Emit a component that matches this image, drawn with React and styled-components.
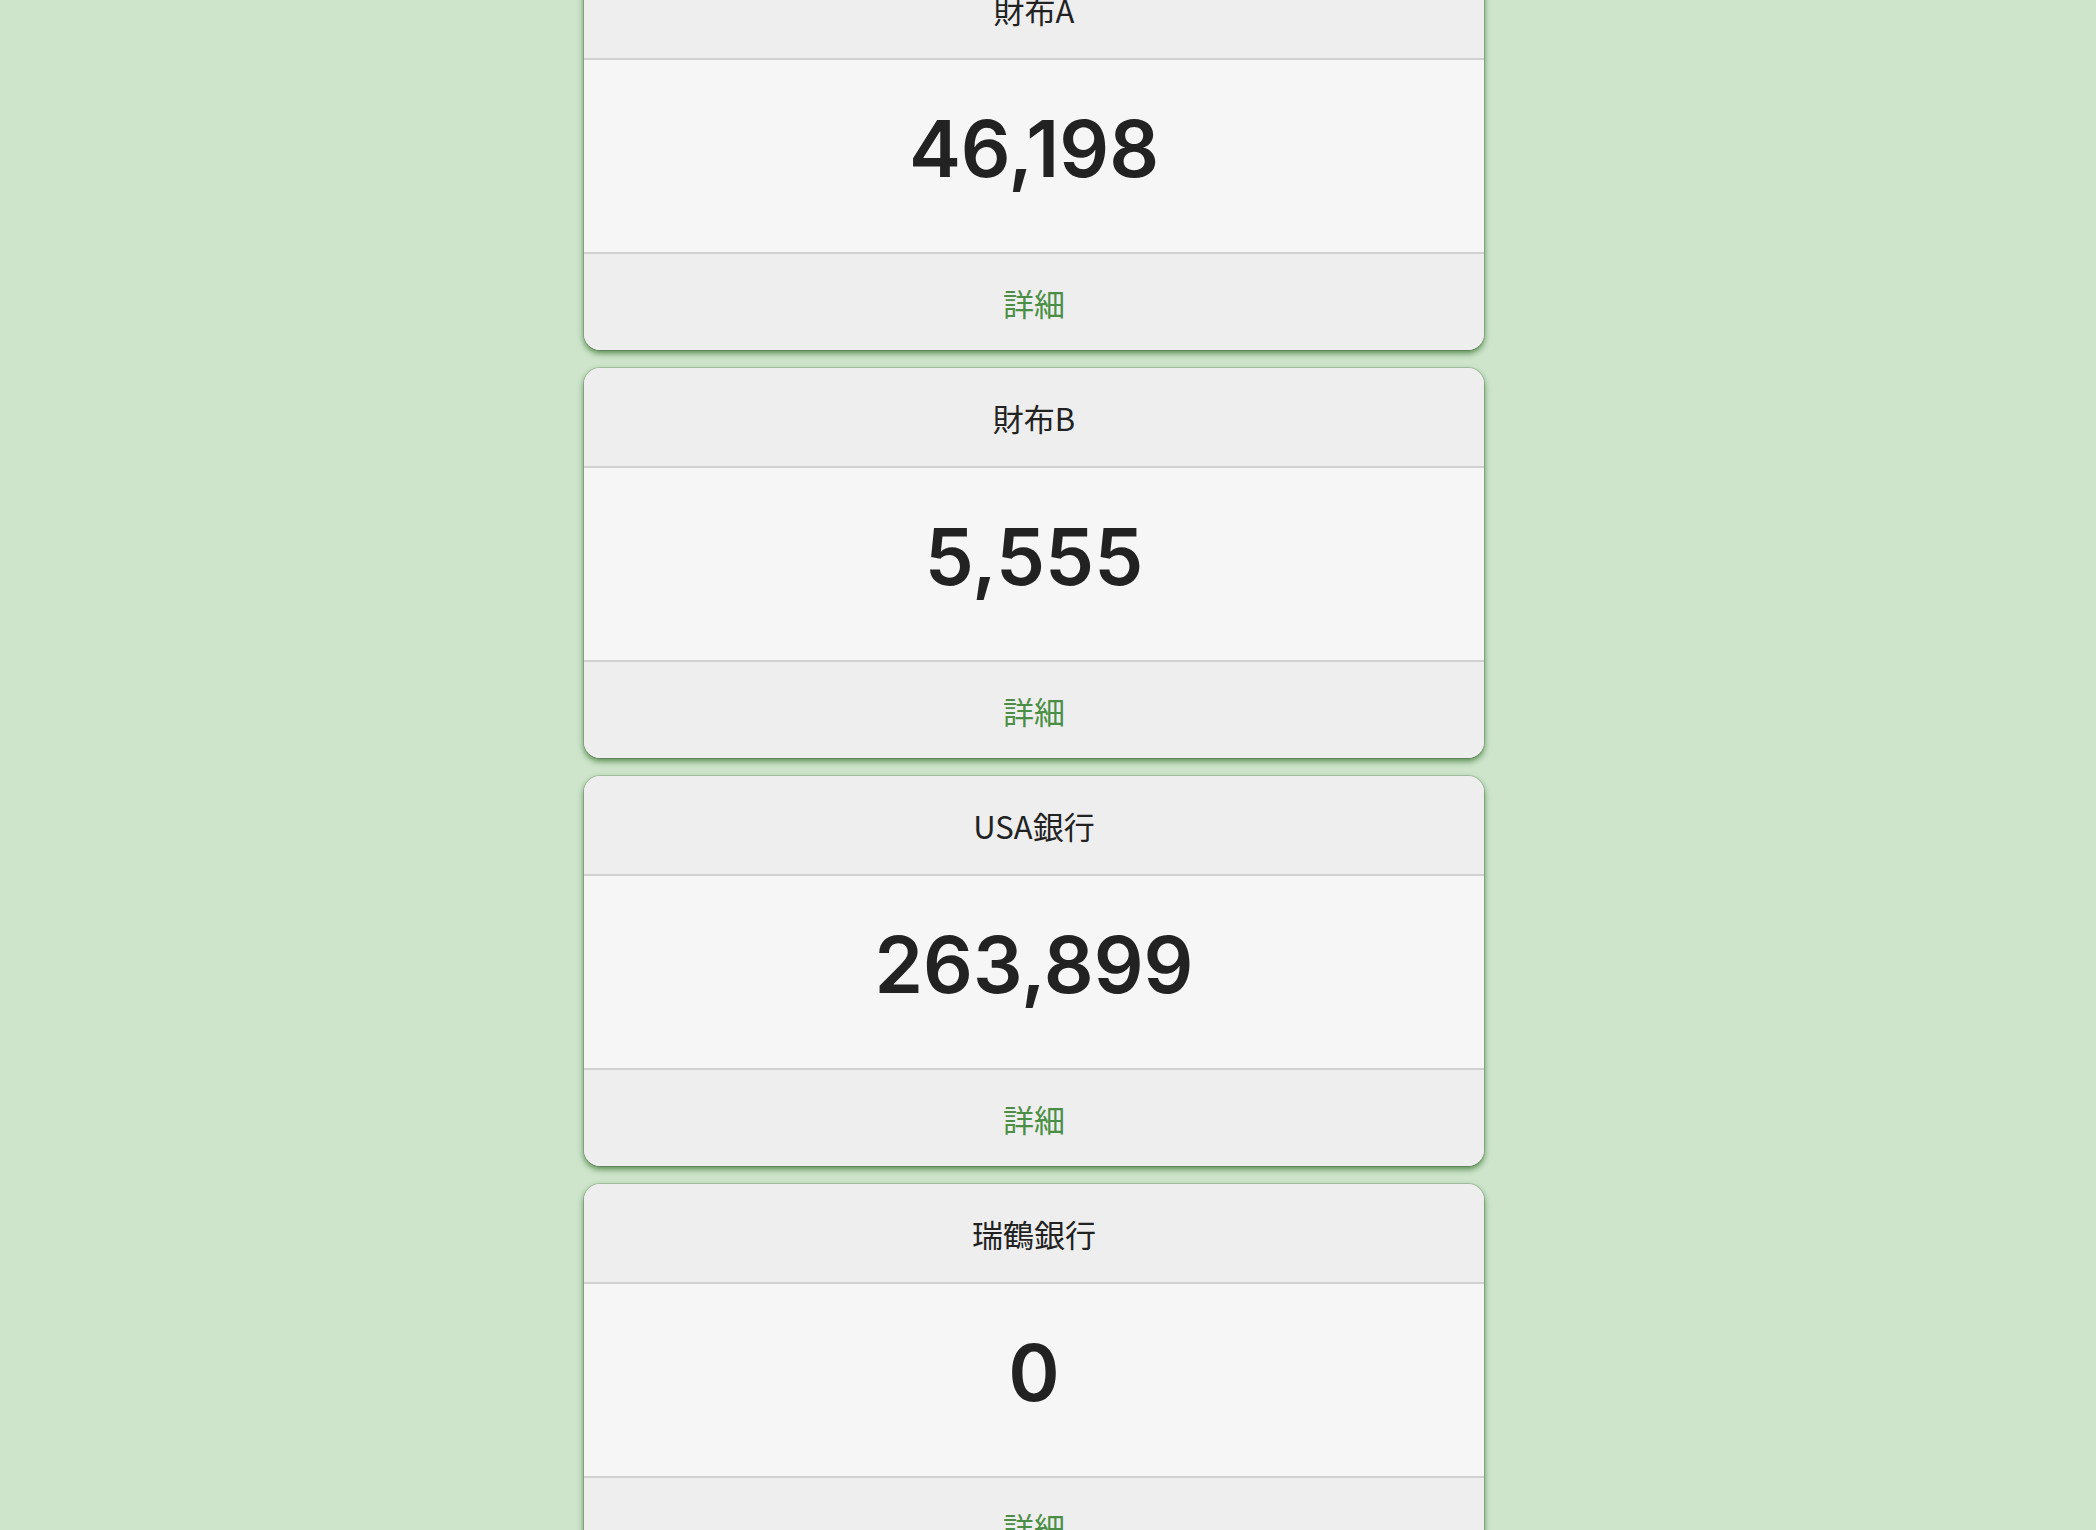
import React from 'react'
import styled, { createGlobalStyle } from "styled-components";

const GlobalStyle = createGlobalStyle`
  html, body {
    margin: 0;
    padding: 0;
    background-color: #cee5cb;
    font-family: "Noto Sans CJK JP", "Noto Sans", sans-serif;
    overflow: hidden;
  }
`;

const Page = styled.div`
  min-height: 100vh;
  display: flex;
  justify-content: center;
  padding-right: 28px;
  background-color: #cee5cb;
`;

const List = styled.div`
  width: 900px;
  display: flex;
  flex-direction: column;
  gap: 18px;
  margin-top: -40px;
`;

const Card = styled.div`
  display: flex;
  flex-direction: column;
  height: 390px;
  border-radius: 16px;
  overflow: hidden;
  background-color: #eeeeee;
  box-shadow: 0 0 0 1px rgba(0, 0, 0, 0.13), 0 3px 6px 0 rgba(55, 115, 45, 0.85);
  flex-shrink: 0;
`;

const Header = styled.div`
  height: 98px;
  display: flex;
  align-items: center;
  justify-content: center;
  font-size: 31px;
  color: #222;
  background-color: #eeeeee;
  border-bottom: 2px solid #d2d2d2;
`;

const Body = styled.div`
  height: 192px;
  display: flex;
  align-items: center;
  justify-content: center;
  background-color: #f6f6f6;
  border-bottom: 2px solid #d2d2d2;
`;

const Amount = styled.span`
  font-family: Inter, "Noto Sans", sans-serif;
  font-size: 78px;
  font-weight: 600;
  color: #222;
  line-height: 1;
  margin-top: -14px;
`;

const Footer = styled.div`
  flex: 1;
  display: flex;
  align-items: center;
  justify-content: center;
  background-color: #eeeeee;
`;

const DetailLink = styled.a`
  font-size: 31px;
  color: #4a8f45;
  text-decoration: none;
  cursor: pointer;
`;

const wallets = [
  { name: "財布A", amount: 46198 },
  { name: "財布B", amount: 5555 },
  { name: "USA銀行", amount: 263899 },
  { name: "瑞鶴銀行", amount: 0 },
];

const App = () => {
  return (
    <>
      <GlobalStyle />
      <Page>
        <List>
          {wallets.map(w => (
            <Card key={w.name}>
              <Header>{w.name}</Header>
              <Body>
                <Amount>{w.amount.toLocaleString("en-US")}</Amount>
              </Body>
              <Footer>
                <DetailLink>詳細</DetailLink>
              </Footer>
            </Card>
          ))}
        </List>
      </Page>
    </>
  )
}

export default App
